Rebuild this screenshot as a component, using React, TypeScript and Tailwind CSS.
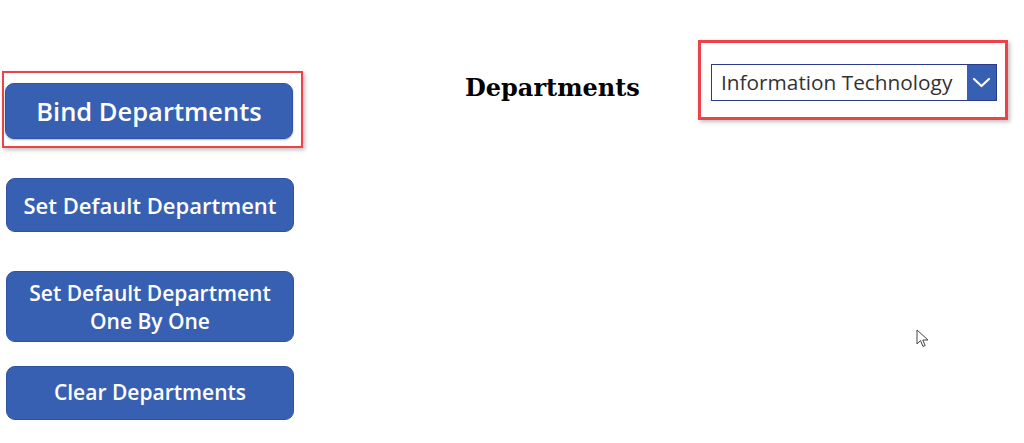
import React from 'react';

const btn =
  "flex items-center justify-center text-center text-white font-semibold rounded-[9px] bg-[#3860b2] border border-[#2f53a3] [font-family:'Open_Sans',sans-serif]";

const Cursor: React.FC = () => (
  <svg width="14" height="19" viewBox="0 0 14 19" className="absolute left-[916px] top-[329px]">
    <path
      d="M1 1 L1 15 L4.5 11.5 L7 17.5 L9.2 16.5 L6.8 11 L12 11 Z"
      fill="white"
      stroke="#444"
      strokeWidth="1"
      strokeLinejoin="round"
    />
  </svg>
);

export default function App() {
  return (
    <div className="relative w-[1024px] h-[443px] bg-white overflow-hidden flex">
      {/* buttons column */}
      <div className="flex flex-col pl-[2px] pt-[71px] w-[310px] shrink-0">
        <div className="w-[301px] h-[77px] border-2 border-[#ec4249] shadow-[2px_2px_4px_rgba(0,0,0,0.25)] pl-[1px] pt-[10px]">
          <button className={`${btn} w-[288px] h-[56px] text-[25.5px] border-[#2a4c9a] shadow-[0_1px_2px_rgba(0,0,0,0.3)]`}>
            Bind Departments
          </button>
        </div>
        <button className={`${btn} ml-[4px] mt-[30px] w-[288px] h-[54px] text-[22px]`}>
          Set Default Department
        </button>
        <button className={`${btn} ml-[4px] mt-[39px] w-[288px] h-[71px] text-[21px] leading-[28px]`}>
          Set Default Department
          <br />
          One By One
        </button>
        <button className={`${btn} ml-[4px] mt-[24px] w-[288px] h-[54px] text-[21px]`}>
          Clear Departments
        </button>
      </div>

      {/* label */}
      <div className="ml-[155px] mt-[72px] h-[32px] flex items-center">
        <span className="text-[24px] font-bold text-black [font-family:'DejaVu_Serif',serif]">
          Departments
        </span>
      </div>

      {/* dropdown */}
      <div className="ml-auto mr-[16px] mt-[40px] w-[310px] h-[80px] border-[3px] border-[#ec4249] shadow-[2px_2px_4px_rgba(0,0,0,0.25)] pl-[10px] pt-[21px] self-start">
        <div className="flex w-[286px] h-[37px] border border-[#2b3a8c] bg-white">
          <div className="flex-1 flex items-center pl-[9px] text-[20.8px] text-[#333] [font-family:'Open_Sans',sans-serif]">
            Information Technology
          </div>
          <div className="w-[29px] h-full bg-[#3860b2] flex items-center justify-center">
            <svg width="19" height="11" viewBox="0 0 19 11">
              <path d="M2 2 L9.5 9 L17 2" fill="none" stroke="white" strokeWidth="2.2" strokeLinecap="round" strokeLinejoin="round" />
            </svg>
          </div>
        </div>
      </div>

      <Cursor />
    </div>
  );
}
